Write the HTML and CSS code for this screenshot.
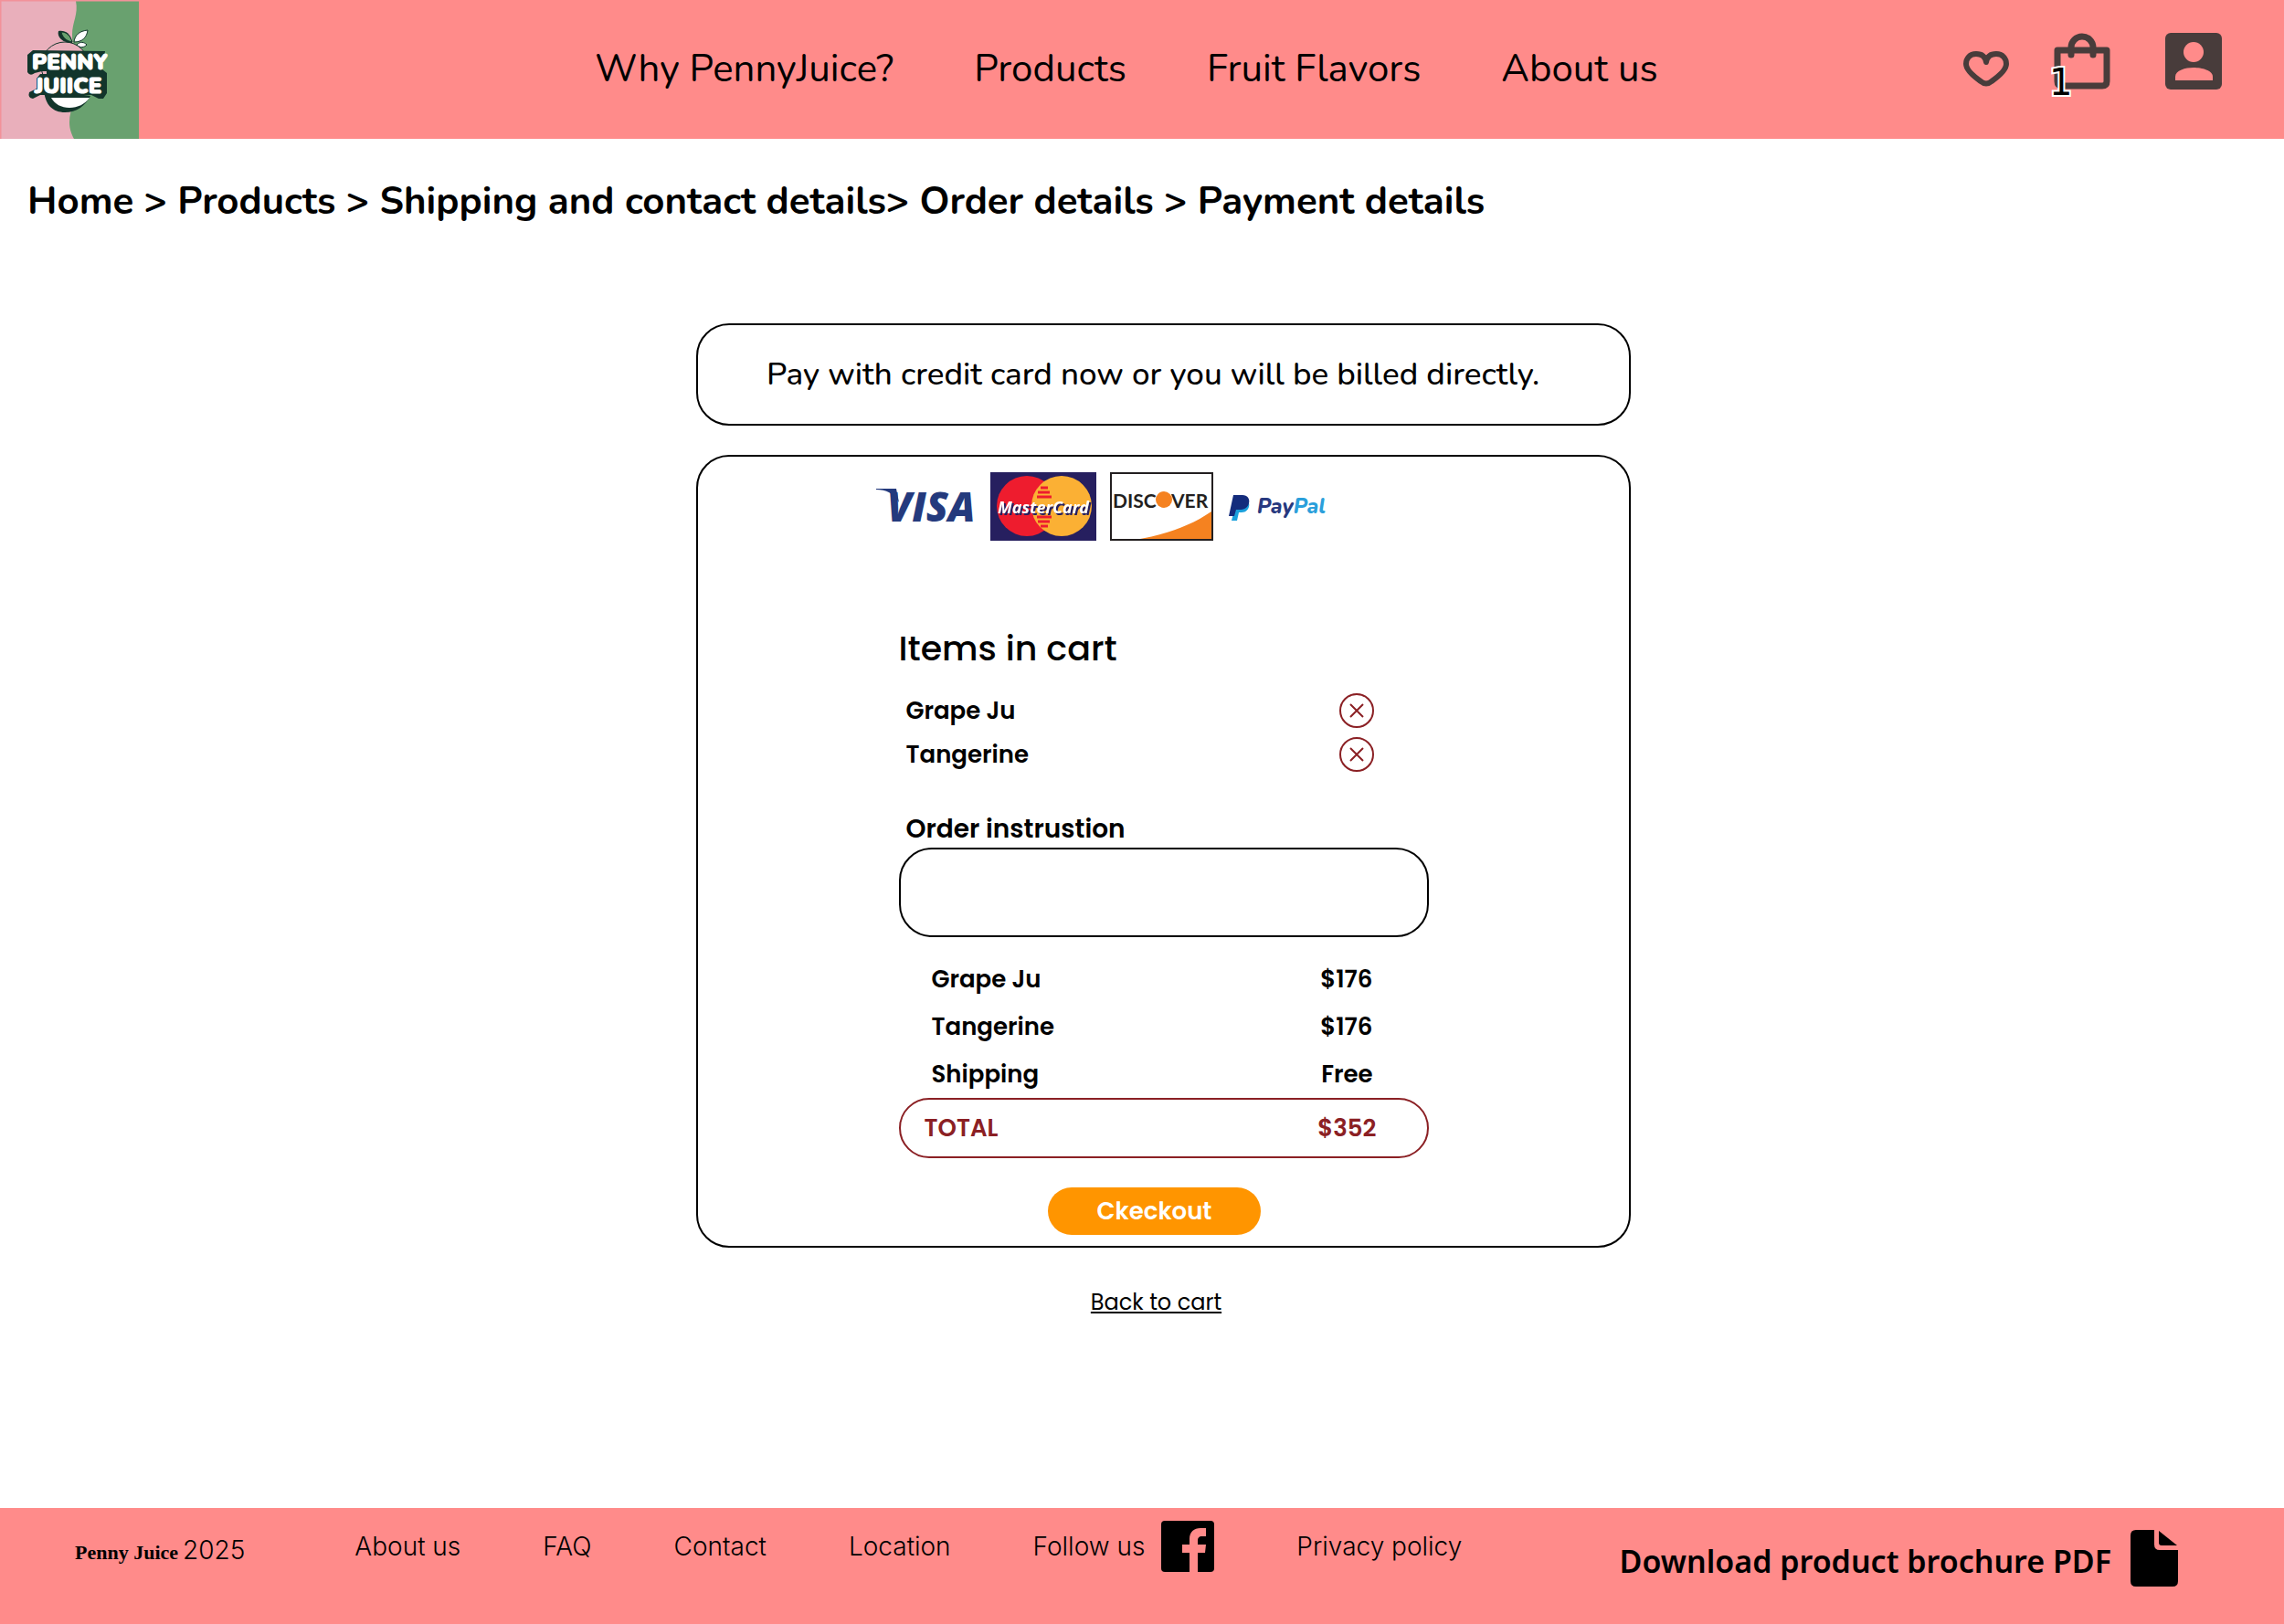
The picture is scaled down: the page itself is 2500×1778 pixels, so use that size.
FILE: index.html
```html
<!DOCTYPE html>
<html lang="en">
<head>
    <meta charset="UTF-8">
    <meta name="viewport" content="width=device-width, initial-scale=1.0">
    <title>Penny Juice - Payment details</title>
    <link rel="stylesheet" href="styles.css">
</head>
<body>
    <header class="site-header">
        <a href="#" class="logo" aria-label="Penny Juice">
            <svg viewBox="0 0 152 152" width="152" height="152">
                <rect width="152" height="152" fill="#e9afbb"/>
                <path d="M83 1 C86 16 79 24 79 38 C79 60 88 70 86 92 C85 108 76 118 76 134 C76 142 79 148 81 152 H152 V1 Z" fill="#69a16f"/>
                <path d="M0 0.500 H152 M0.500 0 V152" stroke="#f2929a" stroke-width="2"/>
                <circle cx="71" cy="72" r="26" fill="#e9afbb" stroke="#12352b" stroke-width="1"/>
                <path d="M48 98 C49 115 58 123 71 123 C84 123 93 116 99 105 Z" fill="#12352b"/>
                <path d="M79 46 C77 36 71 33 64 34 C62 40 68 47 79 47 Z" fill="#12352b"/>
                <path d="M79 46 C77 39 73 35 67 35 C68 41 73 45 79 46 Z" fill="#69a16f" stroke="#12352b" stroke-width="1"/>
                <path d="M81 46 C82 38 87 34 96 33 C95 41 90 46 81 46 Z M84 49 C88 45 92 46 95 49 C92 52 88 53 84 49 Z" fill="#fff" stroke="#12352b" stroke-width="1"/>
                <!-- letter shadow -->
                <path d="M36 55 L30 60 V79 Q33 84 38 80 L46 78 H51 V81 H44 L40 86 V97 L32 101 Q30 107 36 108 L44 104 H100 L108 108 H113 L117 102 V80 L112 76 L115 56 Z" fill="#12352b"/>
                <path d="M56 107 H98 C93 114 85 118 76 118 C67 118 60 114 56 107 Z" fill="#fff"/>
                <g class="logo-text">
                    <text x="35" y="76">PENNY</text>
                    <text x="38" y="102">JUIICE</text>
                </g>
            </svg>
        </a>
        <nav class="main-nav">
            <a href="#">Why PennyJuice?</a>
            <a href="#">Products</a>
            <a href="#">Fruit Flavors</a>
            <a href="#">About us</a>
        </nav>
        <div class="header-icons">
            <a href="#" class="heart" aria-label="Favorites">
                <svg viewBox="0 0 52 40" width="52" height="40" fill="none" stroke="#483c3b" stroke-width="6" stroke-linecap="round" stroke-linejoin="round">
                    <path d="M26 13 C25 7 21 4 15 4 C8 4 4 9 4 15 C4 22 13 29 20 34 Q26 39 32 34 C39 29 48 22 48 15 C48 9 44 4 37 4 C31 4 27 7 26 13 Z"/>
                </svg>
            </a>
            <a href="#" class="bag" aria-label="Cart">
                <svg viewBox="0 0 62 62" width="62" height="62" fill="none" stroke="#483c3b" stroke-width="7">
                    <path d="M4 19 H58 V53 Q58 58 53 58 H9 Q4 58 4 53 Z" stroke-linejoin="round"/>
                    <path d="M19 24 V16 A12 12 0 0 1 43 16 V24" stroke-linecap="round"/>
                </svg>
                <span class="bag-count">1</span>
            </a>
            <a href="#" aria-label="Account">
                <svg viewBox="0 0 62 62" width="62" height="62">
                    <rect width="62" height="62" rx="6" fill="#483c3b"/>
                    <circle cx="31" cy="21" r="11" fill="#ff8b8a"/>
                    <path d="M11 52 V48 C11 41 22 38 31 38 C40 38 52 41 52 48 V52 Z" fill="#ff8b8a"/>
                </svg>
            </a>
        </div>
    </header>

    <nav class="breadcrumb">
        <a href="#">Home</a> &gt; <a href="#">Products</a> &gt; <a href="#">Shipping and contact details</a>&gt; <a href="#">Order details</a> &gt; <a href="#">Payment details</a>
    </nav>

    <main>
        <p class="notice">Pay with credit card now or you will be billed directly.</p>

        <section class="panel">
            <div class="cards">
                <svg viewBox="0 0 500 78" width="500" height="78">
                    <!-- Visa -->
                    <text x="13" y="55" class="visa">VISA</text>
                    <path d="M1 19 H23 L26 34 C20 24 12 20 1 20 Z" fill="#243a7d"/>
                    <!-- MasterCard -->
                    <rect x="126" y="1" width="116" height="75" fill="#261f5f"/>
                    <circle cx="166" cy="38" r="33" fill="#ee1c2e"/>
                    <circle cx="204" cy="38" r="33" fill="#fbb034"/>
                    <path d="M181 18 H189 M178 23 H191 M177 28 H193 M177 50 H193 M178 55 H191 M181 60 H189" stroke="#ee1c2e" stroke-width="3"/>
                    <text x="134" y="46" class="mc">MasterCard</text>
                    <!-- Discover -->
                    <rect x="258" y="2" width="111" height="73" fill="#fff" stroke="#231f20" stroke-width="2"/>
                    <path d="M368 44 V74 H290 C322 68 346 59 368 44 Z" fill="#f58220"/>
                    <text x="260" y="40" class="discover">DISC</text>
                    <circle cx="316" cy="31" r="9" fill="#f58220"/>
                    <text x="324" y="40" class="discover">VER</text>
                    <!-- PayPal -->
                    <path d="M396 31 H404 C412 31 411 45 401 45 H398 L396 54 H390 Z" fill="#1aa0dc"/>
                    <path d="M392 26 H402 C413 26 411 42 400 42 H395 L393 49 H387 Z" fill="#142c7c"/>
                    <text x="418" y="46" class="paypal"><tspan fill="#27397f">Pay</tspan><tspan fill="#2a9fdb">Pal</tspan></text>
                </svg>
            </div>

            <div class="order">
                <h1>Items in cart</h1>
                <ul class="items">
                    <li>
                        <span>Grape Ju</span>
                        <button type="button" class="remove" aria-label="Remove Grape Ju">
                            <svg viewBox="0 0 38 38" width="38" height="38" fill="none" stroke="#8b2024" stroke-width="2"><circle cx="19" cy="19" r="18"/><path d="M12 12 L26 26 M26 12 L12 26"/></svg>
                        </button>
                    </li>
                    <li>
                        <span>Tangerine</span>
                        <button type="button" class="remove" aria-label="Remove Tangerine">
                            <svg viewBox="0 0 38 38" width="38" height="38" fill="none" stroke="#8b2024" stroke-width="2"><circle cx="19" cy="19" r="18"/><path d="M12 12 L26 26 M26 12 L12 26"/></svg>
                        </button>
                    </li>
                </ul>

                <label for="instruction">Order instrustion</label>
                <textarea id="instruction"></textarea>

                <table class="summary">
                    <tr><th scope="row">Grape Ju</th><td>$176</td></tr>
                    <tr><th scope="row">Tangerine</th><td>$176</td></tr>
                    <tr><th scope="row">Shipping</th><td>Free</td></tr>
                </table>
                <div class="total"><span>TOTAL</span><span>$352</span></div>

                <button type="submit" class="checkout">Ckeckout</button>
            </div>
        </section>

        <a href="#" class="back">Back to cart</a>
    </main>

    <footer class="site-footer">
        <div class="copyright"><span class="brand">Penny Juice</span>2025</div>
        <nav class="footer-nav">
            <a href="#">About us</a>
            <a href="#">FAQ</a>
            <a href="#">Contact</a>
            <a href="#">Location</a>
            <a href="#" class="follow">Follow us
                <svg viewBox="0 0 58 56" width="58" height="56">
                    <rect width="58" height="56" rx="4" fill="#000"/>
                    <path d="M31 56 V35 H23 V26 H31 V20 C31 12 36 8 43 8 H49 V17 H45 C41 17 40 19 40 22 V26 H49 L48 35 H40 V56 Z" fill="#ff8b8a"/>
                </svg>
            </a>
            <a href="#">Privacy policy</a>
        </nav>
        <a href="#" class="brochure"><span>Download product brochure PDF</span>
            <svg viewBox="0 0 52 62" width="52" height="62">
                <path d="M6 0 H26 V16 Q26 22 32 22 H52 V56 Q52 62 46 62 H6 Q0 62 0 56 V6 Q0 0 6 0 Z M31 1 L51 17 H34 Q31 17 31 14 Z" fill="#000"/>
            </svg>
        </a>
    </footer>
</body>
</html>
```
FILE: styles.css
```css
:root {
    --pink: #ff8b8a;
    --maroon: #8b2024;
    --orange: #ff9500;
    --rounded: Nunito, "Open Sans", "Noto Sans", sans-serif;
    --geometric: Poppins, Inter, "Liberation Sans", sans-serif;
}

* {
    margin: 0;
    padding: 0;
    box-sizing: border-box;
}

body {
    min-height: 100vh;
    display: flex;
    flex-direction: column;
    background: #fff;
    color: #000;
    font-family: var(--geometric);
}

a {
    color: inherit;
    text-decoration: none;
}

svg {
    display: block;
}

/* Header */
.site-header {
    display: grid;
    grid-template-columns: 1fr auto 1fr;
    align-items: center;
    padding-right: 34px;
    background: var(--pink);
}

.logo-text {
    font: 900 24px Nunito, "Liberation Sans", sans-serif;
    fill: #fff;
    stroke: #fff;
    stroke-width: 1px;
}

.main-nav {
    display: flex;
    gap: 88px;
    font-family: var(--rounded);
    font-size: 42px;
    line-height: 56px;
}

.header-icons {
    display: flex;
    justify-content: flex-end;
    align-items: center;
    gap: 60px;
    padding: 0 34px 18px 0;
}

.heart {
    margin: 16px -12px 0 0;
}

.bag {
    position: relative;
}

.bag-count {
    position: absolute;
    left: -5px;
    bottom: -16px;
    font: 40px/48px "DejaVu Sans", sans-serif;
    -webkit-text-stroke: 4px #fff;
    paint-order: stroke fill;
}

/* Breadcrumb */
.breadcrumb {
    padding: 41px 30px 0;
    font-family: var(--rounded);
    font-size: 42px;
    font-weight: 700;
    line-height: 56px;
}

/* Payment */
main {
    display: flex;
    flex-direction: column;
    align-items: center;
    padding: 105px 0 64px 47px;
}

.notice,
.panel {
    width: 100%;
    max-width: 1023px;
    border: 2px solid #000;
    border-radius: 36px;
}

.notice {
    padding: 30px 75px;
    font-family: var(--rounded);
    font-size: 35px;
    font-weight: 500;
    line-height: 48px;
}

.panel {
    margin-top: 32px;
    padding: 16px 0 12px;
}

.cards {
    margin-left: 194px;
}

.visa {
    font: italic 800 44px "Open Sans", sans-serif;
    fill: #243a7d;
}

.mc {
    font: italic 700 18px "Open Sans", sans-serif;
    fill: #fff;
    filter: drop-shadow(2px 2px 0 #261f5f);
}

.discover {
    font: 700 21px Lato, sans-serif;
    fill: #231f20;
}

.paypal {
    font: italic 800 23px Nunito, sans-serif;
}

.order {
    display: flex;
    flex-direction: column;
    max-width: 580px;
    margin: 0 auto;
    padding-top: 88px;
    font-size: 26px;
    font-weight: 600;
    line-height: 40px;
}

h1 {
    margin-bottom: 16px;
    font-size: 38px;
    font-weight: 500;
    line-height: 56px;
}

.items {
    padding: 0 60px 0 8px;
    list-style: none;
}

.items li {
    display: flex;
    justify-content: space-between;
    align-items: center;
    height: 48px;
}

.remove {
    border: none;
    background: none;
    cursor: pointer;
}

label {
    margin-top: 38px;
    padding-left: 8px;
    font-size: 28px;
}

textarea {
    height: 98px;
    padding: 16px 24px;
    border: 2px solid #000;
    border-radius: 36px;
    background: none;
    font: inherit;
    resize: none;
}

.summary {
    margin-top: 20px;
    border-collapse: collapse;
}

.summary tr {
    height: 52px;
}

.summary th {
    padding-left: 36px;
    text-align: left;
    font-weight: 600;
}

.summary td {
    padding-right: 61px;
    text-align: right;
}

.total {
    display: flex;
    justify-content: space-between;
    padding: 11px 55px 11px 26px;
    border: 2px solid var(--maroon);
    border-radius: 36px;
    color: var(--maroon);
}

.checkout {
    align-self: center;
    margin: 32px 20px 0 0;
    padding: 6px 54px;
    border: none;
    border-radius: 26px;
    background: var(--orange);
    color: #fff;
    font: inherit;
    cursor: pointer;
}

.back {
    margin: 40px 16px 0 0;
    font-size: 24px;
    line-height: 40px;
    text-decoration: underline;
}

/* Footer */
.site-footer {
    display: flex;
    align-items: flex-start;
    margin-top: auto;
    min-height: 127px;
    padding: 14px 116px 0 82px;
    background: var(--pink);
    font-family: Inter, sans-serif;
    font-size: 28px;
    font-weight: 300;
    line-height: 56px;
}

.copyright {
    padding-top: 4px;
}

.brand {
    margin-right: 5px;
    font: 700 22px "Liberation Serif", serif;
}

.footer-nav {
    display: flex;
    gap: 90px;
    margin-left: 120px;
}

.follow,
.brochure {
    display: flex;
    align-items: center;
    gap: 18px;
}

.brochure {
    gap: 21px;
    margin: 10px 0 0 auto;
    font-family: "Noto Sans", sans-serif;
    font-size: 34px;
    font-weight: 600;
    line-height: 56px;
}

.brochure span {
    padding-top: 6px;
}
```
